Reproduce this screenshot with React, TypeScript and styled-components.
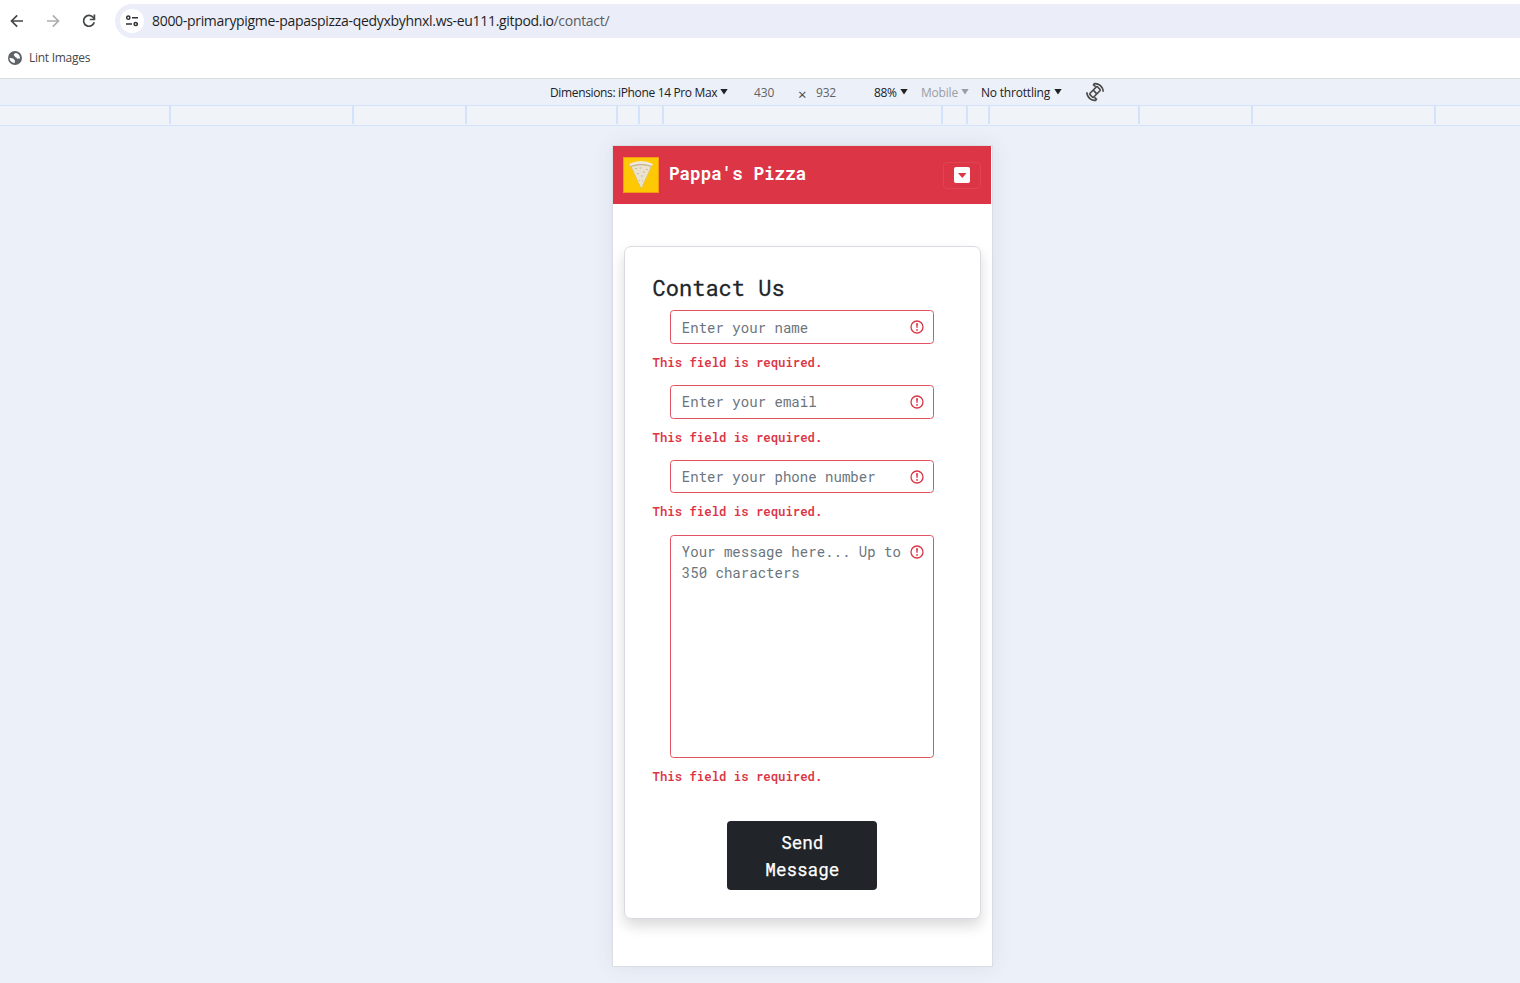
import React from 'react';
import styled, { createGlobalStyle } from 'styled-components';

const GlobalStyle = createGlobalStyle`
  * { box-sizing: border-box; }
  body { margin: 0; background: #ecf0f9; overflow: hidden; }
`;

const ui = `'Segoe UI', 'Open Sans', 'Noto Sans', sans-serif`;
const mono = `'Roboto Mono', 'DejaVu Sans Mono', 'Liberation Mono', monospace`;

const Browser = styled.div`
  display: flex;
  flex-direction: column;
  width: 1520px;
  height: 983px;
  font-family: ${ui};
  background: #ecf0f9;
`;

const Toolbar = styled.header`
  display: flex;
  align-items: center;
  height: 42px;
  padding-left: 8px;
  background: #fff;
`;

const NavButton = styled.button<{ $muted?: boolean }>`
  display: flex;
  align-items: center;
  justify-content: center;
  width: 18px;
  height: 18px;
  margin-right: 18px;
  padding: 0;
  border: 0;
  background: none;
  color: ${(p) => (p.$muted ? '#aeaeae' : '#444746')};
`;

const AddressBar = styled.div`
  display: flex;
  flex: 1;
  align-items: center;
  height: 34px;
  margin-left: -1px;
  padding-left: 5px;
  border-radius: 17px 0 0 17px;
  background: #ebeef8;
`;

const SiteInfo = styled.span`
  display: flex;
  align-items: center;
  justify-content: center;
  width: 24px;
  height: 24px;
  margin-right: 8px;
  border-radius: 50%;
  background: #fff;
`;

const Url = styled.span`
  font-size: 14px;
  line-height: 20px;
  letter-spacing: -0.31px;
  white-space: nowrap;
  color: #1f1f1f;
`;

const UrlPath = styled.span`
  color: #5a5b5e;
`;

const Bookmarks = styled.nav`
  display: flex;
  align-items: center;
  height: 37px;
  padding: 0 0 5px 8px;
  border-bottom: 1px solid #dadde0;
  background: #fff;
`;

const Bookmark = styled.a`
  display: flex;
  align-items: center;
  gap: 7px;
  font-size: 12px;
  letter-spacing: -0.27px;
  color: #474747;
`;

const DeviceBar = styled.div`
  display: flex;
  align-items: center;
  height: 26px;
  padding-left: 550px;
  font-size: 12px;
  color: #202124;
`;

const Item = styled.span<{ $width: number; $spacing?: number; $tone?: string }>`
  display: flex;
  align-items: center;
  width: ${(p) => p.$width}px;
  letter-spacing: ${(p) => p.$spacing ?? 0}px;
  white-space: nowrap;
  color: ${(p) => p.$tone ?? '#202124'};
`;

const Times = styled(Item)`
  padding-top: 3px;
  font-size: 15px;
`;

const Label = styled.span<{ $width: number }>`
  width: ${(p) => p.$width}px;
`;

const Caret = styled.span`
  width: 8px;
  height: 6px;
  margin-top: -1px;
  background: currentColor;
  clip-path: polygon(0 0, 100% 0, 50% 100%);
`;

const Ruler = styled.div`
  display: flex;
  height: 21px;
  padding-bottom: 1px;
  border-top: 1px solid #d3e3fd;
  border-bottom: 1px solid #d3e3fd;
  background: #f0f4f9;
`;

const Segment = styled.span<{ $width: number }>`
  flex: none;
  width: ${(p) => p.$width}px;
  border-right: 2px solid #d3e3fd;
`;

const Viewport = styled.main`
  display: flex;
  flex: 1;
  align-items: flex-start;
  padding: 19px 0 0 612px;
`;

const Phone = styled.div`
  width: 381px;
  height: 822px;
  border: 1px solid #dadde2;
  background: #fff;
  box-shadow: 0 0 20px rgba(60, 70, 90, 0.09);
`;

const SiteHeader = styled.div`
  display: flex;
  align-items: center;
  width: 378px;
  height: 58px;
  padding: 0 10px;
  background: #dc3545;
`;

const Brand = styled.span`
  flex: 1;
  margin: -3px 0 0 10px;
  font: 700 17.6px/26px ${mono};
  white-space: nowrap;
  color: #fff;
`;

const MenuButton = styled.button`
  display: flex;
  align-items: center;
  justify-content: center;
  width: 38px;
  height: 27px;
  margin-top: 1px;
  padding: 0 0 1px;
  border: 1px solid #e04453;
  border-radius: 4px;
  background: none;
`;

const Card = styled.form`
  display: flex;
  flex-direction: column;
  width: 357px;
  height: 673px;
  margin: 42px 0 0 11px;
  padding: 27px 29px 0 27.6px;
  border: 1px solid #d8dce1;
  border-radius: 7px;
  background: #fff;
  box-shadow: 0 7px 14px rgba(0, 0, 0, 0.15);
`;

const Title = styled.h1`
  height: 26px;
  margin: 0 0 10.4px;
  font: 400 22px/27px ${mono};
  -webkit-text-stroke: 0.3px currentColor;
  color: #212529;
`;

const Field = styled.div<{ $height: number }>`
  position: relative;
  width: 264px;
  height: ${(p) => p.$height}px;
  margin-left: 17.2px;
`;

const control = `
  display: block;
  width: 100%;
  height: 100%;
  margin: 0;
  border: 1px solid #e15361;
  border-radius: 3.5px;
  outline: 0;
  background: #fff;
  &::placeholder { color: #6c757d; opacity: 1; }
`;

const Input = styled.input`
  ${control}
  padding: 0 36px 0 11px;
  font: 400 14.06px/21px ${mono};
`;

const TextArea = styled.textarea`
  ${control}
  padding: 5px 30px 6px 11px;
  resize: none;
  overflow: hidden;
  font: 400 14.06px/21px ${mono};
`;

const InvalidMark = styled.svg`
  position: absolute;
  top: 10px;
  right: 9.5px;
`;

const ErrorText = styled.p`
  height: 18.5px;
  margin: 9px 0 13.8px;
  font: 600 12.3px/18.5px ${mono};
  color: #dc3545;
`;

const SendButton = styled.button`
  align-self: center;
  width: 150px;
  height: 69px;
  margin: 21px 0 0;
  padding: 2px 29px 0 30px;
  border: 0;
  border-radius: 4px;
  background: #212529;
  font: 400 17.6px/27px ${mono};
  -webkit-text-stroke: 0.25px currentColor;
  color: #fff;
`;

const ticks = [171, 354, 467, 618, 640, 664, 943, 968, 990, 1140, 1253, 1436];

const ArrowIcon = ({ forward = false }: { forward?: boolean }) => (
  <svg width="14" height="14" viewBox="0 0 14 14" fill="none" stroke="currentColor" strokeWidth="1.7"
    transform={forward ? 'scale(-1 1)' : undefined}>
    <path d="M13 7H2M7.2 1.3 1.5 7l5.7 5.7" />
  </svg>
);

const ReloadIcon = () => (
  <svg width="14" height="14" viewBox="0 0 14 14" fill="none" stroke="currentColor" strokeWidth="1.7">
    <path d="M12.2 8.2A5.4 5.4 0 1 1 11.3 3.6L12.4 5" />
    <path d="M12.4.6v4.9H7.8" />
  </svg>
);

const TuneIcon = () => (
  <svg width="12" height="12" viewBox="0 0 12 12" fill="none" stroke="#303134" strokeWidth="1.5">
    <circle cx="2.3" cy="2.7" r="1.6" />
    <path d="M6 2.7h6M0 9h6" />
    <circle cx="9.7" cy="9" r="1.6" />
  </svg>
);

const GlobeIcon = () => (
  <svg width="14" height="14" viewBox="0 0 14 14">
    <circle cx="7" cy="7" r="7" fill="#5f6368" />
    <path d="M1.5 6.8 5 7.6c1 .2.8 1.2 1.8 1.5v2.8c-3 0-5.3-2.1-5.3-5.1zM7.6 1.9c-1 .7-2 1-1.8 2 .2.8 1.1.8 1.1 1.7 0 .7 1.5.6 1.8 1.4.3.9 1.1 1 1.8.6.5-.3 1.1-.2 1.6 0C12.4 4.8 10.3 2.1 7.6 1.9z" fill="#fff" />
  </svg>
);

const RotateIcon = () => (
  <svg width="20" height="20" viewBox="0 0 20 20" fill="none" stroke="#474747" strokeWidth="1.6">
    <rect x="7.4" y="4.6" width="5.2" height="10.8" rx="1" transform="rotate(45 10 10)" />
    <path d="m8.4 8.4 3.2 3.2" />
    <path d="M8.6 1.8C13.5.8 18 4.6 18.2 9.8M8 2.4l2.6 2.3M11.4 18.2C6.5 19.2 2 15.4 1.8 10.2M12 17.6 9.4 15.3" />
  </svg>
);

const PizzaLogo = () => (
  <svg width="36" height="36" viewBox="0 0 36 36">
    <rect x=".5" y=".5" width="35" height="35" fill="#ffc804" stroke="#f49a13" />
    <path d="M8 9.5Q18 6 28.5 9.5L18.2 32z" fill="#e9e2cf" stroke="#d9ae3a" strokeWidth=".5" />
    <path d="M6.5 6.8Q18 1.3 29.7 6.8L29 9.5Q18 5.7 7.2 9.5z" fill="#eee9dc" />
    <path d="M7.5 9.3Q18 5.5 28.7 9.3" fill="none" stroke="#b9a99a" strokeWidth=".9" />
    <path d="M12 11.5h2M16.5 11h2M23 12.5h2M14 16.5h2M20 15h2M18 19h2M16 23.5h1M19 24h1" stroke="#a99f8d" strokeWidth=".6" />
  </svg>
);

const MenuIcon = () => (
  <svg width="16" height="16" viewBox="0 0 16 16">
    <rect width="16" height="16" rx="2" fill="#fff" />
    <path d="M4 6h8.5l-4.2 5z" fill="#dc3545" />
  </svg>
);

const Invalid = () => (
  <InvalidMark width="14" height="14" viewBox="0 0 14 14">
    <circle cx="7" cy="7" r="6" fill="none" stroke="#dc3545" strokeWidth="1.3" />
    <path d="M6 3.2h2L7.5 8h-1z" fill="#dc3545" />
    <circle cx="7" cy="9.9" r=".9" fill="#dc3545" />
  </InvalidMark>
);

export default function App() {
  return (
    <>
      <GlobalStyle />
      <Browser>
        <Toolbar>
          <NavButton aria-label="Back"><ArrowIcon /></NavButton>
          <NavButton aria-label="Forward" $muted><ArrowIcon forward /></NavButton>
          <NavButton aria-label="Reload"><ReloadIcon /></NavButton>
          <AddressBar>
            <SiteInfo><TuneIcon /></SiteInfo>
            <Url>8000-primarypigme-papaspizza-qedyxbyhnxl.ws-eu111.gitpod.io<UrlPath>/contact/</UrlPath></Url>
          </AddressBar>
        </Toolbar>
        <Bookmarks>
          <Bookmark><GlobeIcon />Lint Images</Bookmark>
        </Bookmarks>
        <DeviceBar>
          <Item $width={204} $spacing={-0.35}><Label $width={170}>Dimensions: iPhone 14 Pro Max</Label><Caret /></Item>
          <Item $width={44} $spacing={-0.1} $tone="#5f6368">430</Item>
          <Times $width={18} $tone="#474747">×</Times>
          <Item $width={58} $spacing={-0.2} $tone="#5f6368">932</Item>
          <Item $width={47} $spacing={-0.4}><Label $width={26}>88%</Label><Caret /></Item>
          <Item $width={60} $spacing={-0.2} $tone="#9a9da3"><Label $width={40}>Mobile</Label><Caret /></Item>
          <Item $width={104} $spacing={-0.2}><Label $width={73}>No throttling</Label><Caret /></Item>
          <RotateIcon />
        </DeviceBar>
        <Ruler>
          {ticks.map((edge, i) => <Segment key={edge} $width={edge - (ticks[i - 1] ?? 0)} />)}
        </Ruler>
        <Viewport>
          <Phone>
            <SiteHeader>
              <PizzaLogo />
              <Brand>Pappa's Pizza</Brand>
              <MenuButton type="button" aria-label="Menu"><MenuIcon /></MenuButton>
            </SiteHeader>
            <Card>
              <Title>Contact Us</Title>
              {['Enter your name', 'Enter your email', 'Enter your phone number'].map((hint) => (
                <React.Fragment key={hint}>
                  <Field $height={33.5}><Input placeholder={hint} /><Invalid /></Field>
                  <ErrorText>This field is required.</ErrorText>
                </React.Fragment>
              ))}
              <Field $height={223.6}>
                <TextArea placeholder="Your message here... Up to 350 characters" />
                <Invalid />
              </Field>
              <ErrorText>This field is required.</ErrorText>
              <SendButton type="button">Send Message</SendButton>
            </Card>
          </Phone>
        </Viewport>
      </Browser>
    </>
  );
}
